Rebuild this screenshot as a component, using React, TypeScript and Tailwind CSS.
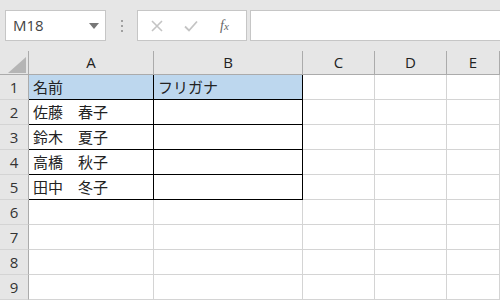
import React from "react";

const cols = ["A", "B", "C", "D", "E"];
const data: Record<number, [string, string]> = {
  1: ["名前", "フリガナ"],
  2: ["佐藤　春子", ""],
  3: ["鈴木　夏子", ""],
  4: ["高橋　秋子", ""],
  5: ["田中　冬子", ""],
};

export default function App() {
  const font = { fontFamily: '"Noto Sans CJK JP", "Noto Sans", sans-serif' };
  return (
    <div className="w-[500px] h-[300px] overflow-hidden bg-white" style={font}>
      {/* toolbar */}
      <div className="h-[51px] bg-[#e6e6e6] flex items-start pt-[10px] pl-[5px]">
        <div className="w-[101px] h-[31px] bg-white border border-[#c6c6c6] flex items-center justify-between pl-[7px] pr-[6px]">
          <span className="text-[15px] text-[#444] leading-none" style={{ fontFamily: '"Open Sans", "Noto Sans", sans-serif' }}>M18</span>
          <svg width="10" height="6" viewBox="0 0 10 6"><path d="M0 0h10L5 6z" fill="#777" /></svg>
        </div>
        <div className="w-[31px] h-[31px] flex flex-col items-center justify-center gap-[3px]">
          <span className="w-[2px] h-[2px] bg-[#a0a0a0]" />
          <span className="w-[2px] h-[2px] bg-[#a0a0a0]" />
          <span className="w-[2px] h-[2px] bg-[#a0a0a0]" />
        </div>
        <div className="w-[110px] h-[31px] bg-white border border-[#c6c6c6] flex items-center">
          <svg className="ml-[13px]" width="12" height="12" viewBox="0 0 12 12"><path d="M1 1L11 11M11 1L1 11" stroke="#c4c4c4" strokeWidth="1.6" /></svg>
          <svg className="ml-[21px]" width="14" height="12" viewBox="0 0 14 12"><path d="M1 6.5L5 10.5L13 1.5" stroke="#c4c4c4" strokeWidth="1.8" fill="none" /></svg>
          <span className="ml-[22px] text-[14px] italic text-[#666] leading-none" style={{ fontFamily: '"Liberation Serif", serif' }}>
            f<span className="text-[11px]">x</span>
          </span>
        </div>
        <div className="ml-[3px] flex-1 h-[31px] bg-white border border-[#c6c6c6] border-r-0" />
      </div>
      {/* grid */}
      <div className="grid grid-cols-[29px_125px_149px_72px_72px_1fr] grid-rows-[24px_repeat(9,25px)]">
        <div className="bg-[#e6e6e6] border-r border-b border-[#ababab] relative">
          <svg className="absolute left-[8px] top-[6px]" width="18" height="16" viewBox="0 0 18 16"><path d="M18 0V16H0z" fill="#b5b5b5" /></svg>
        </div>
        {cols.map((c) => (
          <div key={c} className="bg-[#e6e6e6] border-r border-b border-[#ababab] flex items-center justify-center text-[15px] text-[#222]" style={{ fontFamily: '"Open Sans", "Noto Sans", sans-serif' }}>
            {c}
          </div>
        ))}
        {Array.from({ length: 9 }, (_, i) => i + 1).map((r) => {
          const row = data[r];
          return (
            <React.Fragment key={r}>
              <div className="bg-[#e6e6e6] border-r border-b border-[#ababab] border-b-[#d4d4d4] flex items-center justify-center text-[15px] text-[#333]" style={{ fontFamily: '"Open Sans", "Noto Sans", sans-serif' }}>
                {r}
              </div>
              {cols.map((c, ci) => {
                const inTable = row && ci < 2;
                const hdr = r === 1 && ci < 2;
                const text = row && ci < 2 ? row[ci] : "";
                return (
                  <div
                    key={c}
                    className={
                      "border-r border-b flex items-center pl-[4px] text-[15px] text-[#222] whitespace-pre " +
                      (inTable ? "border-black " : "border-[#d4d4d4] ") +
                      (hdr ? "bg-[#bdd7ee] " : "bg-white ") +
                      (ci === 1 && r === 1 ? "" : "")
                    }
                  >
                    {text}
                  </div>
                );
              })}
            </React.Fragment>
          );
        })}
      </div>
    </div>
  );
}
